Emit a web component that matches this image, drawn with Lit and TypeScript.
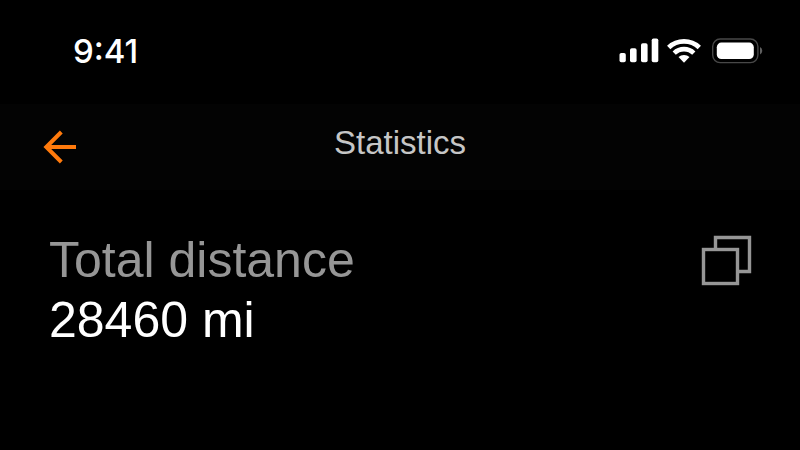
import { LitElement, html, css } from "lit";
import { customElement, property } from "lit/decorators.js";

@customElement("status-bar")
class StatusBar extends LitElement {
  @property() time = "9:41";

  static styles = css`
    :host {
      display: flex;
      align-items: center;
      justify-content: space-between;
      box-sizing: border-box;
      height: 104px;
      padding: 0 37px 2px 73px;
    }
    .time {
      font: 500 33px/36px Inter, sans-serif;
      color: #fff;
    }
    .icons {
      display: flex;
      align-items: center;
      gap: 8px;
    }
    svg {
      display: block;
    }
  `;

  render() {
    return html`
      <time class="time">${this.time}</time>
      <div class="icons">
        <svg width="40" height="26" viewBox="0 0 40 26" fill="#fff" role="img" aria-label="Signal">
          <rect x="0.5" y="15" width="6.3" height="9.2" rx="1.8" />
          <rect x="11" y="10.3" width="6.6" height="13.9" rx="1.8" />
          <rect x="22" y="5.2" width="6.6" height="19" rx="1.8" />
          <rect x="32.7" y="0.4" width="6.6" height="23.8" rx="1.8" />
        </svg>
        <svg width="37" height="26" viewBox="0 0 37 26" fill="none" stroke="#fff" role="img" aria-label="Wi-Fi">
          <path d="M1.7 9.5A22.4 22.4 0 0 1 32.3 9.5" stroke-width="4.8" />
          <path d="M7.2 15.1A14 14 0 0 1 26.8 15.1" stroke-width="4.6" />
          <path d="M11.5 19.1A8 8 0 0 1 22.5 19.1L17 24.8Z" fill="#fff" stroke="none" />
        </svg>
        <svg width="51" height="26" viewBox="0 0 51 26" role="img" aria-label="Battery">
          <rect x="0.7" y="1" width="45.2" height="23.6" rx="7.5" fill="none" stroke="#484848" stroke-width="1.4" />
          <rect x="4.8" y="4.6" width="37" height="16.4" rx="4.6" fill="#fff" />
          <path d="M48 9a4.3 4.3 0 0 1 0 7.6z" fill="#606060" />
        </svg>
      </div>
    `;
  }
}

@customElement("title-bar")
class TitleBar extends LitElement {
  @property() heading = "";

  static styles = css`
    :host {
      display: grid;
      grid-template-columns: 1fr auto 1fr;
      align-items: center;
      box-sizing: border-box;
      height: 86px;
      padding: 0 40px;
      background: #030303;
    }
    .back {
      justify-self: start;
      padding: 0;
      border: 0;
      background: none;
      color: #ff7a0c;
      cursor: pointer;
    }
    svg {
      display: block;
    }
    h1 {
      margin: 0;
      padding-bottom: 8px;
      font: 400 33px/40px "Liberation Sans", Arial, sans-serif;
      color: #c6c6c6;
    }
  `;

  render() {
    return html`
      <button class="back" aria-label="Back">
        <svg width="40" height="40" viewBox="0 0 40 40" fill="none" stroke="currentColor" stroke-width="4">
          <path d="M36 20H6M21.3 5L6.3 20L21.3 35" />
        </svg>
      </button>
      <h1>${this.heading}</h1>
    `;
  }
}

@customElement("app-root")
class AppRoot extends LitElement {
  static styles = css`
    :host {
      display: block;
      min-height: 100vh;
      background: #000;
    }
    .stat {
      display: flex;
      align-items: flex-start;
      justify-content: space-between;
      padding: 40px 48px 40px 49px;
    }
    dl,
    dd {
      margin: 0;
    }
    dl {
      font: 400 50px/60px "Liberation Sans", Arial, sans-serif;
    }
    dt {
      color: #969696;
    }
    dd {
      color: #fff;
    }
    .copy {
      padding: 5px 0;
      border: 0;
      background: none;
      color: #969696;
      cursor: pointer;
    }
    svg {
      display: block;
    }
  `;

  render() {
    return html`
      <status-bar></status-bar>
      <title-bar heading="Statistics"></title-bar>
      <main class="stat">
        <dl>
          <dt>Total distance</dt>
          <dd>28460 mi</dd>
        </dl>
        <button class="copy" aria-label="Copy">
          <svg width="51" height="51" viewBox="0 0 51 51" fill="none" stroke="currentColor" stroke-width="3.4">
            <path d="M14.5 14V2.5H48.5V36.5H37" />
            <rect x="2.5" y="14.5" width="34" height="34" />
          </svg>
        </button>
      </main>
    `;
  }
}
